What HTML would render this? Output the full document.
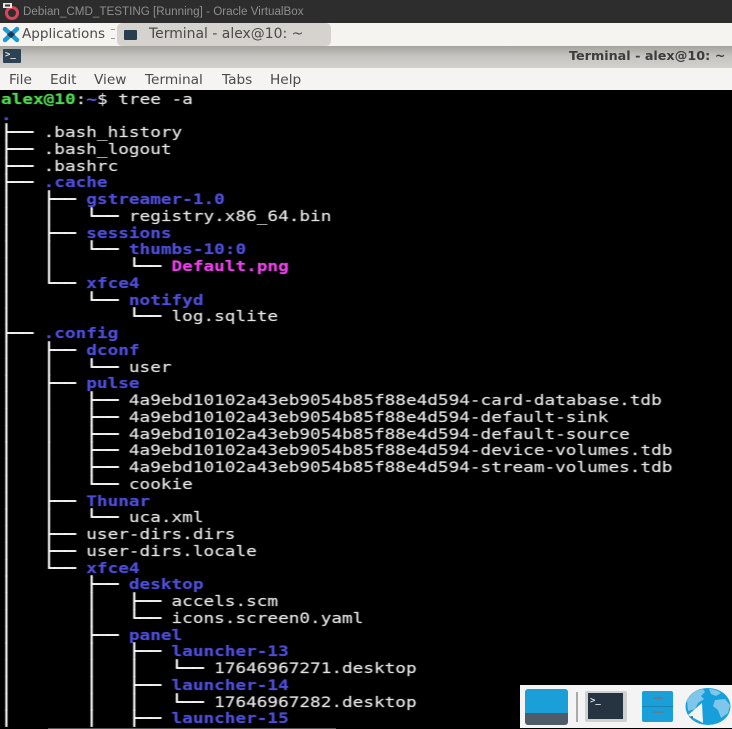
<!DOCTYPE html>
<html><head><meta charset="utf-8"><style>
html,body{margin:0;padding:0;background:#000}
body{width:732px;height:729px;position:relative;overflow:hidden;font-family:"Liberation Sans",sans-serif}
.a{position:absolute}
#term{left:0;top:90px;width:732px;height:639px;background:#000;overflow:hidden}
#t{position:absolute;left:1px;top:1.6px;margin:0;font:14.4px/16.75px "DejaVu Sans Mono",monospace;color:#e6e6e6;transform:scaleX(1.23);transform-origin:0 0;white-space:pre;filter:blur(.35px);-webkit-text-stroke:.15px}
i{font-style:normal;color:#fff;-webkit-text-stroke:.55px #fff}
b.g{color:#4fdc4f}b.n{color:#5a5ae8}
.d{color:#4e4edc;font-weight:bold}.m{color:#ee40ee;font-weight:bold}
.menu span{position:absolute;top:4px;font-size:13.7px;color:#4a4a4a;font-family:"DejaVu Sans",sans-serif;white-space:pre}
</style></head><body>
<div class="a" style="left:0;top:0;width:732px;height:23px;background:#2d2d2d"></div>
<svg class="a" style="left:2px;top:2px" width="18" height="19" viewBox="0 0 18 19"><circle cx="10" cy="11" r="5.5" fill="none" stroke="#d8465c" stroke-width="3"/><rect x="1" y="1" width="9" height="5" fill="#e8e8e8"/><rect x="3" y="2.5" width="5" height="2" fill="#333"/></svg>
<div class="a" style="left:23px;top:4px;font-size:11.65px;line-height:15px;color:#8f8f8f;white-space:pre">Debian_CMD_TESTING [Running] - Oracle VirtualBox</div>

<div class="a" style="left:0;top:23px;width:732px;height:23px;background:#f6f4f1"></div>
<svg class="a" style="left:2px;top:26px" width="18" height="17" viewBox="0 0 18 17"><path d="M3 3 L15 14 M15 3 L3 14" stroke="#1a9ad6" stroke-width="4.5" stroke-linecap="round"/><path d="M5 8.5 L9 5 L13 8.5 L9 12Z" fill="#1b3a52"/></svg>
<div class="a" style="left:22px;top:26px;font:13.6px/16px 'DejaVu Sans',sans-serif;color:#4a4a4a;white-space:pre">Applications</div>
<div class="a" style="left:111px;top:29px;width:4px;height:10px;border-top:1px solid #999;border-bottom:1px solid #999;box-sizing:border-box"></div>
<div class="a" style="left:117px;top:23px;width:214px;height:23px;background:#d6d3cf;border-radius:5px"></div>
<div class="a" style="left:124px;top:30px;width:13px;height:10px;background:#2a3d4e;border-radius:1px"></div>
<div class="a" style="left:149px;top:26px;font:13.95px/16px 'DejaVu Sans',sans-serif;color:#4a4a4a;white-space:pre">Terminal - alex@10: ~</div>

<div class="a" style="left:0;top:46px;width:732px;height:22px;background:linear-gradient(#a5a39e,#c6c4c0 45%,#d2d0cc)"></div>
<div class="a" style="left:3px;top:49px;width:18px;height:14px;background:#2d4354;border-radius:1px"></div>
<div class="a" style="left:5px;top:48px;font:bold 9px/14px 'DejaVu Sans Mono',monospace;color:#e8e8e8;white-space:pre">&gt;_</div>
<div class="a" style="left:569px;top:49px;font:bold 12.75px/16px 'DejaVu Sans',sans-serif;color:#3c3c3c;white-space:pre">Terminal - alex@10: ~</div>

<div class="a menu" style="left:0;top:68px;width:732px;height:22px;background:#f5f4f2">
<span style="left:9px">File</span><span style="left:50px">Edit</span><span style="left:94px">View</span><span style="left:145px">Terminal</span><span style="left:222px">Tabs</span><span style="left:270px">Help</span>
</div>

<div id="term" class="a"><pre id="t"><b class="g">alex@10</b>:<b class="n">~</b>$ tree -a
<span class="d">.</span>
<i>├──</i> .bash_history
<i>├──</i> .bash_logout
<i>├──</i> .bashrc
<i>├──</i> <span class="d">.cache</span>
<i>│   ├──</i> <span class="d">gstreamer-1.0</span>
<i>│   │   └──</i> registry.x86_64.bin
<i>│   ├──</i> <span class="d">sessions</span>
<i>│   │   └──</i> <span class="d">thumbs-10:0</span>
<i>│   │       └──</i> <span class="m">Default.png</span>
<i>│   └──</i> <span class="d">xfce4</span>
<i>│       └──</i> <span class="d">notifyd</span>
<i>│           └──</i> log.sqlite
<i>├──</i> <span class="d">.config</span>
<i>│   ├──</i> <span class="d">dconf</span>
<i>│   │   └──</i> user
<i>│   ├──</i> <span class="d">pulse</span>
<i>│   │   ├──</i> 4a9ebd10102a43eb9054b85f88e4d594-card-database.tdb
<i>│   │   ├──</i> 4a9ebd10102a43eb9054b85f88e4d594-default-sink
<i>│   │   ├──</i> 4a9ebd10102a43eb9054b85f88e4d594-default-source
<i>│   │   ├──</i> 4a9ebd10102a43eb9054b85f88e4d594-device-volumes.tdb
<i>│   │   ├──</i> 4a9ebd10102a43eb9054b85f88e4d594-stream-volumes.tdb
<i>│   │   └──</i> cookie
<i>│   ├──</i> <span class="d">Thunar</span>
<i>│   │   └──</i> uca.xml
<i>│   ├──</i> user-dirs.dirs
<i>│   ├──</i> user-dirs.locale
<i>│   └──</i> <span class="d">xfce4</span>
<i>│       ├──</i> <span class="d">desktop</span>
<i>│       │   ├──</i> accels.scm
<i>│       │   └──</i> icons.screen0.yaml
<i>│       ├──</i> <span class="d">panel</span>
<i>│       │   ├──</i> <span class="d">launcher-13</span>
<i>│       │   │   └──</i> 17646967271.desktop
<i>│       │   ├──</i> <span class="d">launcher-14</span>
<i>│       │   │   └──</i> 17646967282.desktop
<i>│       │   ├──</i> <span class="d">launcher-15</span></pre></div>

<div class="a" style="left:48px;top:728px;width:288px;height:1px;background:#555"></div>
<div class="a" style="left:520px;top:685px;width:212px;height:43px;background:#f4f4f4"></div>
<div class="a" style="left:525px;top:689px;width:43px;height:36px;border-radius:3px;background:linear-gradient(#1a9fd8 0,#1a9fd8 66%,#4f5b66 66%,#4f5b66 100%)"></div>
<div class="a" style="left:576px;top:692px;width:2px;height:30px;background:#aaa"></div>
<div class="a" style="left:585px;top:691px;width:42px;height:31px;background:#cfd0d0;border-radius:2px"></div>
<div class="a" style="left:588px;top:693px;width:35px;height:26px;background:#263340"></div>
<div class="a" style="left:590px;top:695px;font:bold 9px/12px 'DejaVu Sans Mono',monospace;color:#e8e8e8;white-space:pre">&gt;_</div>
<div class="a" style="left:642px;top:691px;width:31px;height:31px;border-radius:2px;background:linear-gradient(#1a9fd8 0,#1a9fd8 48%,#1683b3 48%,#1683b3 52%,#1a9fd8 52%)"></div>
<div class="a" style="left:653px;top:697px;width:10px;height:2px;background:#5e7f92"></div>
<div class="a" style="left:653px;top:711px;width:10px;height:2px;background:#5e7f92"></div>
<svg class="a" style="left:685px;top:688px" width="47" height="38" viewBox="0 0 47 38"><ellipse cx="23" cy="18.5" rx="22.5" ry="18.5" fill="#169fdb"/><path d="M2 12 Q7 3 18 1 L20 4 L16 8 L19 11 L13 15 L10 21 L3 23Z M24 1 Q31 1 36 5 L31 8 L26 6Z M30 12 L40 11 L45 17 L43 25 L36 30 L33 22 L28 18Z" fill="#7fc7ea"/><path d="M17 15 L18 35 L3 27Z" fill="#f4f4f4"/><circle cx="7" cy="29" r="1" fill="#555"/></svg>
</body></html>
